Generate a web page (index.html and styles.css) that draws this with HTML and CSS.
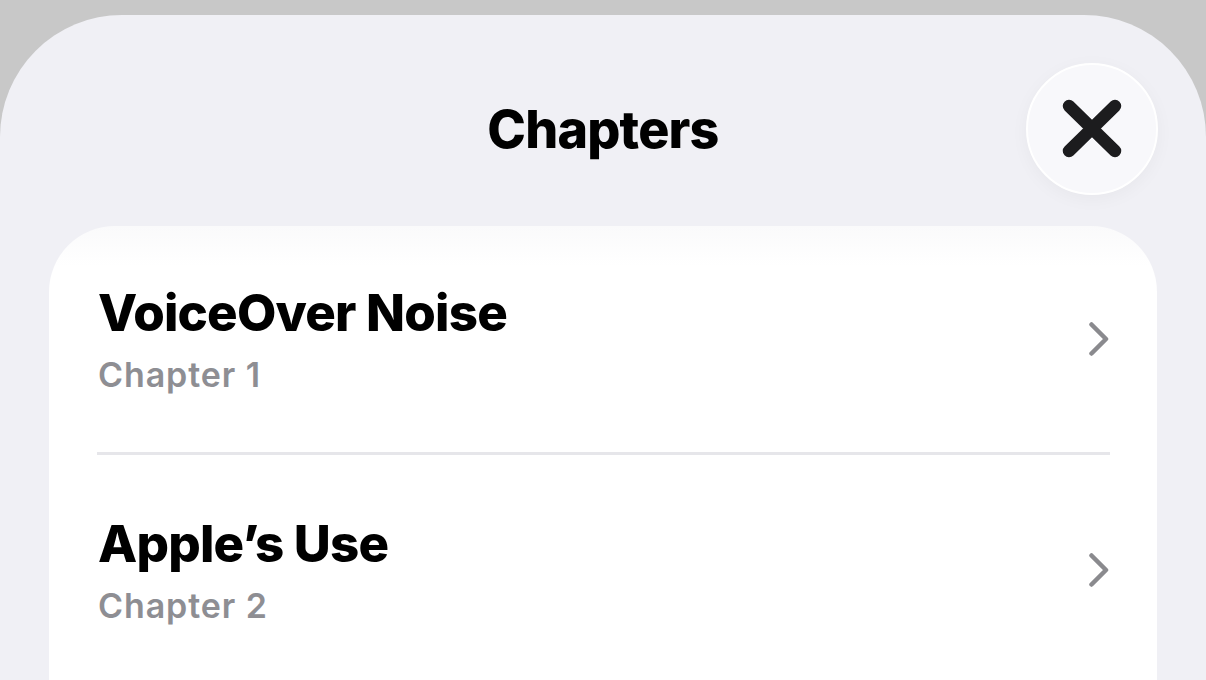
FILE: index.html
```html
<!DOCTYPE html>
<html lang="en">
<head>
<meta charset="utf-8">
<title>Chapters</title>
<link rel="stylesheet" href="styles.css">
</head>
<body>
<div class="sheet">
  <header class="header">
    <div class="spacer"></div>
    <h1 class="title">Chapters</h1>
    <button class="close" aria-label="Close">
      <svg width="60" height="60" viewBox="0 0 60 60" aria-hidden="true">
        <path d="M7 7 L53 52 M53 7 L7 52" stroke="#1c1c1e" stroke-width="12.5" stroke-linecap="round" fill="none"/>
      </svg>
    </button>
  </header>
  <section class="card">
    <div class="row">
      <div class="text">
        <div class="row-title">VoiceOver Noise</div>
        <div class="row-sub">Chapter 1</div>
      </div>
      <svg class="chev" width="20" height="34" viewBox="0 0 20 34" aria-hidden="true">
        <path d="M2.5 2.5 L17 17 L2.5 31.5" stroke="#8a8a8e" stroke-width="4.5" stroke-linecap="round" stroke-linejoin="round" fill="none"/>
      </svg>
    </div>
    <div class="sep"></div>
    <div class="row">
      <div class="text">
        <div class="row-title">Apple’s Use</div>
        <div class="row-sub">Chapter 2</div>
      </div>
      <svg class="chev" width="20" height="34" viewBox="0 0 20 34" aria-hidden="true">
        <path d="M2.5 2.5 L17 17 L2.5 31.5" stroke="#8a8a8e" stroke-width="4.5" stroke-linecap="round" stroke-linejoin="round" fill="none"/>
      </svg>
    </div>
  </section>
</div>
</body>
</html>
```
FILE: styles.css
```css
* { box-sizing: border-box; }
html, body { margin: 0; padding: 0; }
body {
  background: #c8c8c8;
  font-family: Inter, "Noto Sans", "Liberation Sans", sans-serif;
  width: 1206px;
  height: 680px;
  overflow: hidden;
  padding-top: 15px;
}
.sheet {
  background: #f0f0f5;
  border-radius: 122px 122px 0 0;
  height: 665px;
  overflow: hidden;
}
.header {
  height: 211px;
  padding: 48px 48px 0;
  display: grid;
  grid-template-columns: 1fr auto 1fr;
  align-items: start;
}
.title {
  margin: 0;
  height: 132px;
  line-height: 134px;
  font-size: 52px;
  font-weight: 800;
  color: #000;
  letter-spacing: -0.8px;
}
.close {
  justify-self: end;
  width: 132px;
  height: 132px;
  border-radius: 50%;
  border: 2px solid #ffffff;
  background: #f8f8fb;
  box-shadow: 0 4px 18px rgba(0,0,0,0.04);
  padding: 0;
  display: flex;
  align-items: center;
  justify-content: center;
}
.card {
  margin: 0 49px;
  background: linear-gradient(#fafafb, #ffffff 40px);
  border-radius: 66px 66px 0 0;
  height: 454px;
}
.row {
  height: 226px;
  display: flex;
  align-items: center;
  justify-content: space-between;
  padding: 0 48px 0 49px;
}
.row:last-child { height: 229px; }
.text { display: flex; flex-direction: column; }
.row-title {
  font-size: 51px;
  font-weight: 800;
  line-height: 60px;
  color: #000;
  letter-spacing: -0.8px;
}
.row-sub {
  margin-top: 12px;
  font-size: 34px;
  font-weight: 600;
  line-height: 40px;
  color: #8e8e93;
  letter-spacing: 0.9px;
}
.chev { display: block; }
.sep {
  height: 3px;
  background: #e6e6ea;
  margin: 0 47px 0 48px;
}
```
